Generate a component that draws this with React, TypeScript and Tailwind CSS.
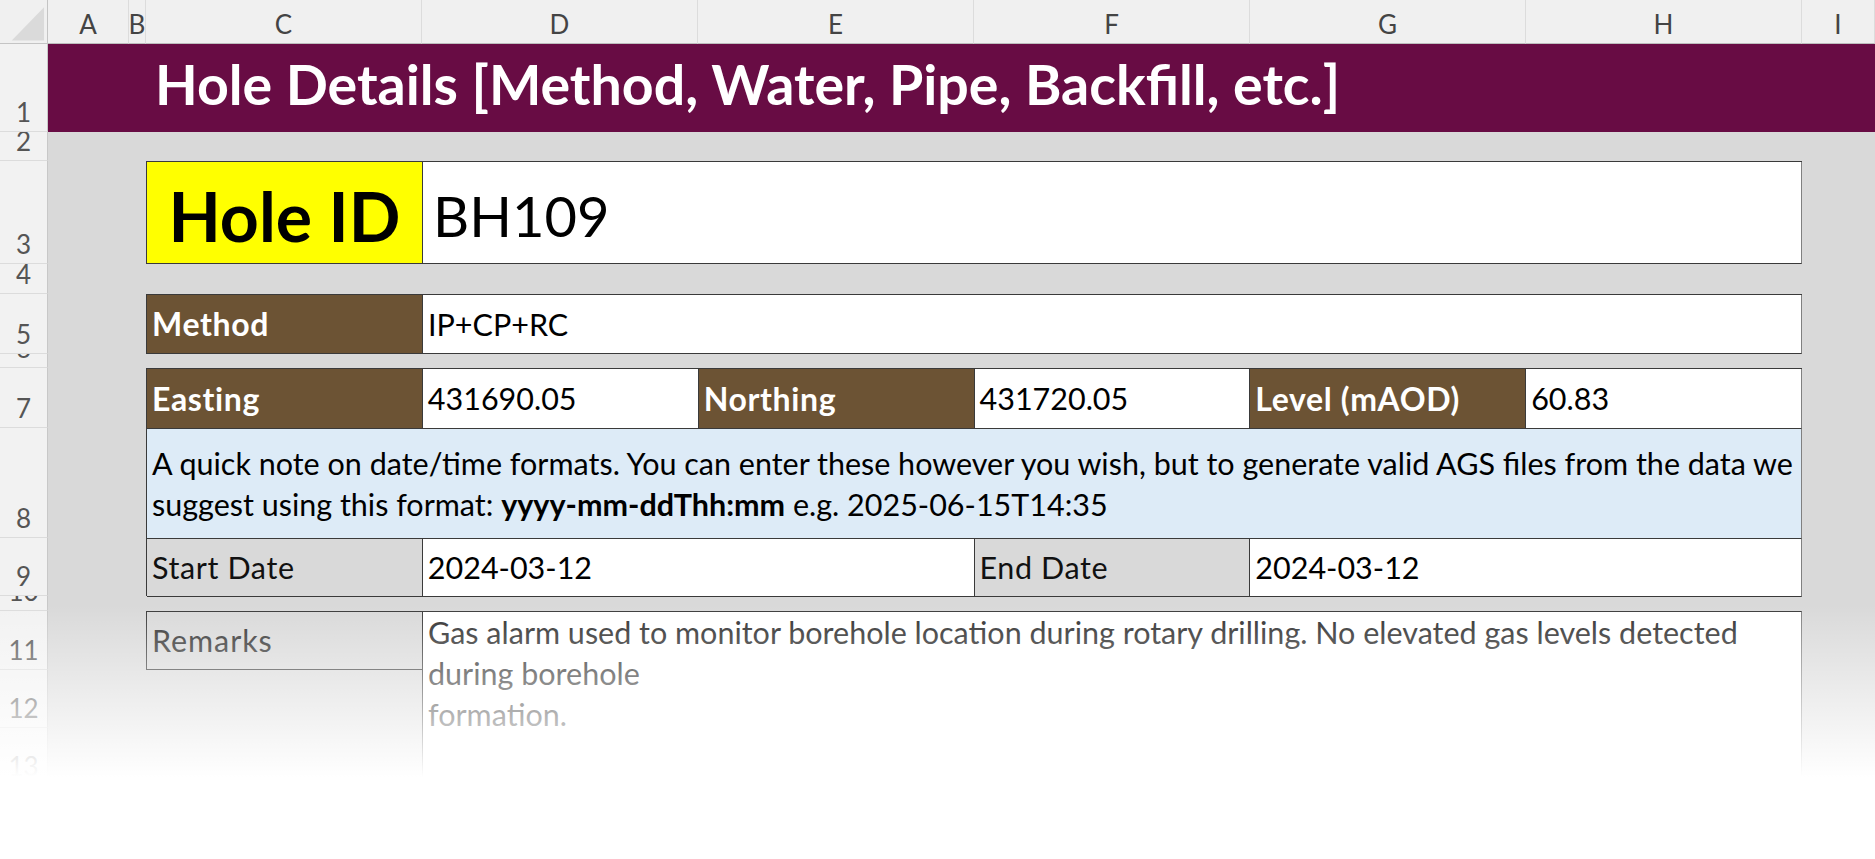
const COLS = [
  { l: "A", cls: "col-start-2" },
  { l: "B", cls: "col-start-3" },
  { l: "C", cls: "col-start-4" },
  { l: "D", cls: "col-start-5" },
  { l: "E", cls: "col-start-6" },
  { l: "F", cls: "col-start-7" },
  { l: "G", cls: "col-start-8" },
  { l: "H", cls: "col-start-9" },
  { l: "I", cls: "col-start-10" },
];

const ROWS = [
  { n: "1", cls: "row-start-2" },
  { n: "2", cls: "row-start-3" },
  { n: "3", cls: "row-start-4" },
  { n: "4", cls: "row-start-5" },
  { n: "5", cls: "row-start-6" },
  { n: "6", cls: "row-start-7" },
  { n: "7", cls: "row-start-8" },
  { n: "8", cls: "row-start-9" },
  { n: "9", cls: "row-start-10" },
  { n: "10", cls: "row-start-11" },
  { n: "11", cls: "row-start-12" },
  { n: "12", cls: "row-start-13" },
  { n: "13", cls: "row-start-14" },
  { n: "14", cls: "row-start-15" },
];

const cell = "border-r border-b border-[#3a3a3a] flex items-center px-[5px] leading-none whitespace-nowrap";
const label = `${cell} bg-[#6c5334] text-white font-bold text-[32px] tracking-[0.02em]`;
const value = `${cell} bg-white text-black text-[30.5px]`;
const grey = `${cell} bg-[#d9d9d9] text-[#111] text-[30.5px] tracking-[0.02em]`;

export default function App() {
  return (
    <div className="relative w-[1875px] h-[859px] overflow-hidden bg-white font-['Lato',sans-serif]">
      <div className="grid grid-cols-[48px_81px_17px_276px_276px_276px_276px_276px_276px_1fr] grid-rows-[44px_88px_29px_103px_30px_60px_14px_60px_110px_58px_15px_59px_58px_58px_58px] bg-[#d9d9d9]">
        {/* corner */}
        <div className="col-start-1 row-start-1 bg-[#f0f0f0] border-r border-b border-[#c4c4c4] flex items-center justify-center">
          <svg width="48" height="44" viewBox="0 0 48 44">
            <polygon points="45,7 45,41 12,41" fill="#dadada" />
          </svg>
        </div>

        {/* column headers */}
        {COLS.map((c) => (
          <div
            key={c.l}
            className={`${c.cls} row-start-1 bg-[#f0f0f0] border-r border-[#dcdcdc] border-b border-b-[#bdbdbd] flex items-end justify-center pb-[6px] text-[26px] leading-none text-[#444]`}
          >
            {c.l}
          </div>
        ))}

        {/* row headers */}
        {ROWS.map((r) => (
          <div
            key={r.n}
            className={`${r.cls} col-start-1 bg-[#f2f2f2] border-b border-[#dcdcdc] border-r border-r-[#c8c8c8] flex items-end justify-center pb-[6px] overflow-hidden text-[26px] leading-none text-[#555]`}
          >
            {r.n}
          </div>
        ))}

        {/* title bar */}
        <div className="col-start-2 col-span-9 row-start-2 bg-[#680c44] flex items-end pl-[107px] pb-[21px]">
          <span className="text-[55.5px] font-bold text-white leading-none whitespace-nowrap">
            Hole Details [Method, Water, Pipe, Backfill, etc.]
          </span>
        </div>

        {/* hole id */}
        <div className="col-start-4 col-span-6 row-start-4 grid grid-cols-[276px_1fr] border-t border-l border-[#3a3a3a]">
          <div className="border-r border-b border-[#3a3a3a] bg-[#ffff00] flex items-center justify-center pt-[6px]">
            <span className="text-[68px] font-bold text-black leading-none">Hole ID</span>
          </div>
          <div className="border-r border-b border-[#3a3a3a] border-r-[#808080] bg-white flex items-center pl-[10px] pt-[6px]">
            <span className="text-[56px] text-black leading-none">BH109</span>
          </div>
        </div>

        {/* method */}
        <div className="col-start-4 col-span-6 row-start-6 grid grid-cols-[276px_1fr] border-t border-l border-[#3a3a3a]">
          <div className={label}>Method</div>
          <div className={`${value} border-r-[#808080]`}>IP+CP+RC</div>
        </div>

        {/* coordinates / note / dates */}
        <div className="col-start-4 col-span-6 row-start-8 row-span-3 grid grid-cols-6 grid-rows-[60px_110px_58px] border-t border-l border-[#3a3a3a]">
          <div className={label}>Easting</div>
          <div className={value}>431690.05</div>
          <div className={label}>Northing</div>
          <div className={value}>431720.05</div>
          <div className={label}>Level (mAOD)</div>
          <div className={`${value} border-r-[#808080]`}>60.83</div>

          <div className="col-span-6 border-r border-b border-[#3a3a3a] border-r-[#808080] bg-[#ddebf7] flex flex-col justify-center px-[5px] text-[30.5px] leading-[41px] text-black whitespace-nowrap">
            <span>
              A quick note on date/time formats. You can enter these however you wish, but to generate valid AGS files from the data we
            </span>
            <span>
              suggest using this format: <b className="font-bold">yyyy-mm-ddThh:mm</b> e.g. 2025-06-15T14:35
            </span>
          </div>

          <div className={grey}>Start Date</div>
          <div className={`${value} col-span-2`}>2024-03-12</div>
          <div className={grey}>End Date</div>
          <div className={`${value} col-span-2 border-r-[#808080]`}>2024-03-12</div>
        </div>

        {/* remarks */}
        <div className="col-start-4 row-start-12 border-t border-l border-b border-[#3a3a3a] bg-[#d9d9d9] flex items-center px-[5px] text-[30.5px] tracking-[0.03em] leading-none text-[#333]">
          Remarks
        </div>
        <div className="col-start-5 col-span-5 row-start-12 row-span-4 bg-white border-t border-l border-r border-[#3a3a3a] border-r-[#808080] flex flex-col px-[5px] text-[30.5px] leading-[41px] text-[#2e2e2e] whitespace-nowrap">
          <span>Gas alarm used to monitor borehole location during rotary drilling. No elevated gas levels detected</span>
          <span>during borehole</span>
          <span>formation.</span>
        </div>
      </div>

      {/* bottom fade */}
      <div className="pointer-events-none absolute inset-x-0 top-[605px] h-[172px] bg-linear-to-b from-white/0 to-white" />
      <div className="pointer-events-none absolute inset-x-0 top-[777px] bottom-0 bg-white" />
    </div>
  );
}
